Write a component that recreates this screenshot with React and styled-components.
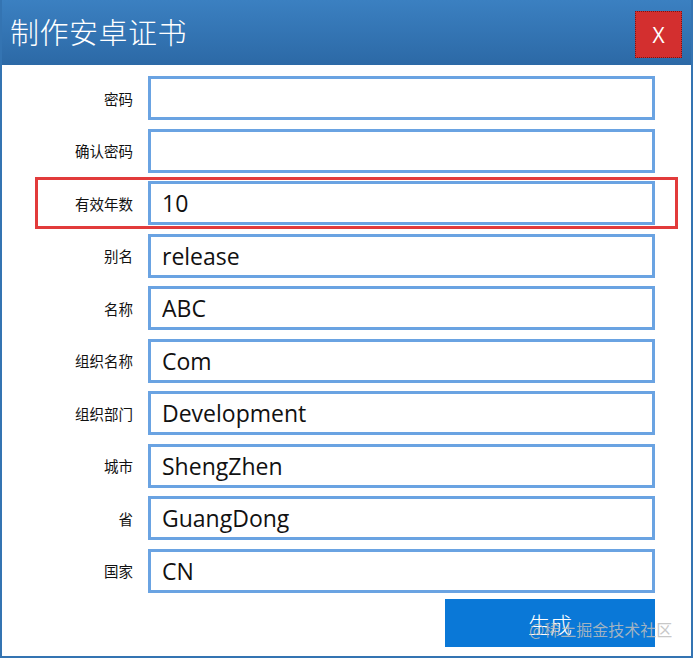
import React from "react";
import styled, { createGlobalStyle } from "styled-components";

const Global = createGlobalStyle`
  html, body { margin: 0; padding: 0; background: #ffffff; }
  * { box-sizing: border-box; }
`;

const Window = styled.div`
  position: relative;
  width: 693px;
  height: 658px;
  display: flex;
  flex-direction: column;
  background: #ffffff;
  border: 2px solid #3474b2;
  border-top: none;
  overflow: hidden;
`;

const TitleBar = styled.div`
  height: 65px;
  margin: 0 -2px;
  flex: none;
  display: flex;
  align-items: center;
  justify-content: space-between;
  padding: 0 11px 4px 10px;
  background: linear-gradient(#3b80c1, #2c69a6);
`;

const Title = styled.div`
  color: #ffffff;
  font-family: "Noto Sans CJK SC", sans-serif;
  font-weight: 300;
  font-size: 29px;
  letter-spacing: 0.5px;
`;

const CloseButton = styled.button`
  width: 47px;
  height: 47px;
  margin-top: 8px;
  background: #d32f2f;
  border: 1px dotted #7a1414;
  color: #ffffff;
  font-family: "Open Sans", sans-serif;
  font-size: 21px;
  display: flex;
  align-items: center;
  justify-content: center;
  padding: 0;
`;

const Form = styled.div`
  display: grid;
  grid-template-columns: 131px 507px;
  column-gap: 15px;
  row-gap: 8.5px;
  padding: 11px 0 0 0;
  align-items: center;
`;

const Row = styled.div`
  display: contents;
`;

const Label = styled.label`
  justify-self: end;
  font-family: "Noto Sans CJK SC", sans-serif;
  font-size: 14.5px;
  color: #111111;
`;

const FieldWrap = styled.div`
  position: relative;
  ${(p) =>
    p.$highlight &&
    `
    &::after {
      content: "";
      position: absolute;
      left: -113px;
      right: -23px;
      top: -4px;
      bottom: -4px;
      border: 3px solid #e23b3b;
      pointer-events: none;
    }
  `}
`;

const Input = styled.input`
  display: block;
  width: 507px;
  height: 44px;
  border: 3px solid #6aa3e2;
  padding: 0 0 0 11px;
  font-family: "Open Sans", sans-serif;
  font-size: 23px;
  color: #111111;
  background: #ffffff;
  outline: none;
`;

const Footer = styled.div`
  display: flex;
  justify-content: flex-end;
  padding: 6px 36px 0 0;
`;

const Generate = styled.button`
  width: 210px;
  height: 48px;
  background: #0a78d7;
  border: none;
  color: #ffffff;
  font-family: "Noto Sans CJK SC", sans-serif;
  font-weight: 300;
  font-size: 22px;
  padding: 0;
`;

const Watermark = styled.div`
  position: absolute;
  left: 527px;
  top: 617px;
  font-family: "Noto Sans CJK SC", sans-serif;
  font-size: 16px;
  color: rgba(190, 190, 190, 0.85);
  pointer-events: none;
  white-space: nowrap;
`;

const fields = [
  { label: "密码", value: "" },
  { label: "确认密码", value: "" },
  { label: "有效年数", value: "10", highlight: true },
  { label: "别名", value: "release" },
  { label: "名称", value: "ABC" },
  { label: "组织名称", value: "Com" },
  { label: "组织部门", value: "Development" },
  { label: "城市", value: "ShengZhen" },
  { label: "省", value: "GuangDong" },
  { label: "国家", value: "CN" },
];

export default function App() {
  return (
    <>
      <Global />
      <Window>
        <TitleBar>
          <Title>制作安卓证书</Title>
          <CloseButton>X</CloseButton>
        </TitleBar>
        <Form>
          {fields.map((f) => (
            <Row key={f.label}>
              <Label>{f.label}</Label>
              <FieldWrap $highlight={f.highlight}>
                <Input defaultValue={f.value} />
              </FieldWrap>
            </Row>
          ))}
        </Form>
        <Footer>
          <Generate>生成</Generate>
        </Footer>
        <Watermark>@稀土掘金技术社区</Watermark>
      </Window>
    </>
  );
}
